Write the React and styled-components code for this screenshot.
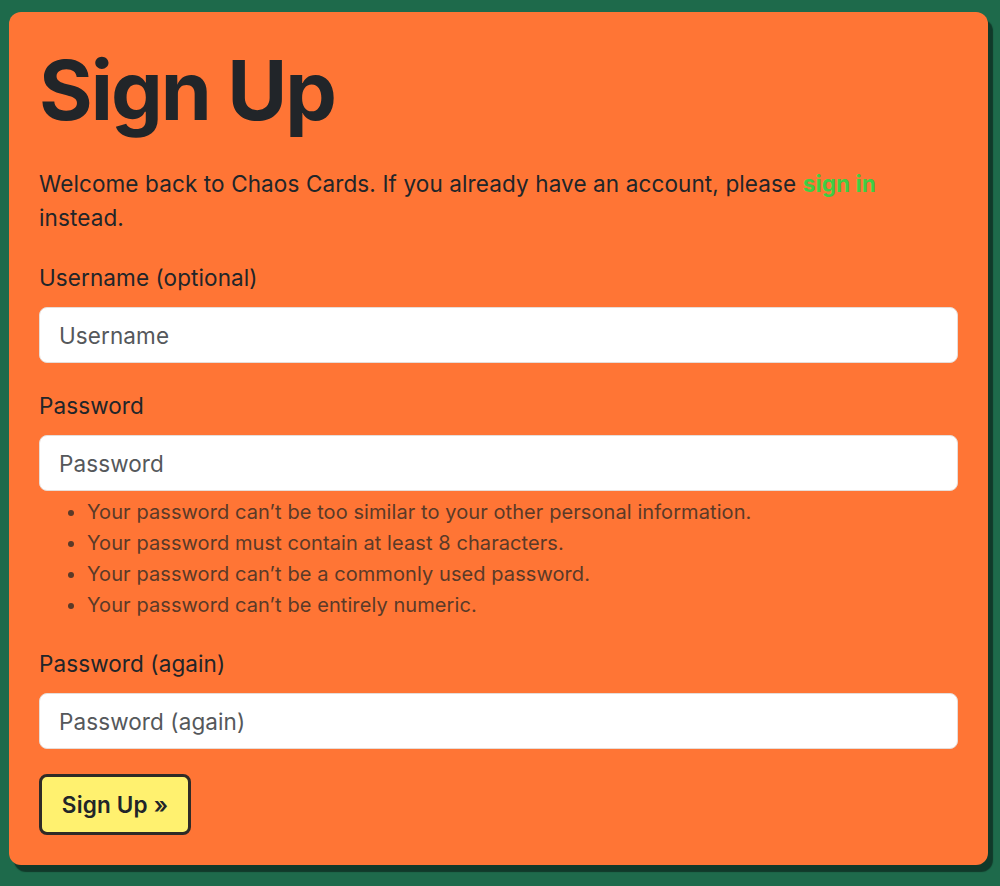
import React from "react";
import styled, { createGlobalStyle } from "styled-components";

const Global = createGlobalStyle`
  html, body { margin: 0; padding: 0; }
  body {
    background: #1e6a4b;
    font-family: Inter, "Noto Sans", "Liberation Sans", sans-serif;
    color: #212529;
    font-size: 22.5px;
    line-height: 1.5;
    letter-spacing: 0.1px;
  }
  * { box-sizing: border-box; }
`;

const Page = styled.div`
  padding: 12px 12px 14px 9px;
  min-height: 886px;
`;

const Card = styled.form`
  background: #ff7535;
  border-radius: 12px;
  padding: 30px;
  width: 979px;
  box-shadow: 5px 7px 1px #11392a;
`;

const Title = styled.h1`
  margin: 0 0 27px;
  font-size: 82px;
  line-height: 1.2;
  font-weight: 700;
  letter-spacing: -2px;
`;

const Intro = styled.p`
  margin: 0 0 26px;
  font-size: 22.5px;
  line-height: 34px;
  letter-spacing: 0.12px;
`;

const Link = styled.a`
  color: #3fcd44;
  font-weight: 700;
  text-decoration: none;
`;

const Group = styled.div`
  display: flex;
  flex-direction: column;
  margin-bottom: ${(p) => p.$gap || 26}px;
`;

const Label = styled.label`
  font-size: 22.5px;
  line-height: 34px;
  margin-bottom: 12px;
`;

const Input = styled.input`
  height: 56px;
  width: 100%;
  border: 1px solid #e6ddd8;
  border-radius: 8px;
  background: #fff;
  padding: 0 19px;
  font-family: inherit;
  font-size: 22.5px;
  letter-spacing: 0.1px;
  color: #212529;
  outline: none;
  &::placeholder { color: #55585b; }
`;

const Help = styled.ul`
  margin: 6px 0 0;
  padding-left: 48px;
  font-size: 20px;
  line-height: 31px;
  letter-spacing: 0.08px;
  color: #5a3a28;
`;

const Button = styled.button`
  width: 152px;
  height: 61px;
  background: #fff16f;
  border: 3px solid #2f2b26;
  border-radius: 8px;
  font-family: inherit;
  font-size: 22.5px;
  font-weight: 600;
  letter-spacing: 0.2px;
  color: #212529;
  padding: 0;
  cursor: pointer;
`;

const rules = [
  "Your password can’t be too similar to your other personal information.",
  "Your password must contain at least 8 characters.",
  "Your password can’t be a commonly used password.",
  "Your password can’t be entirely numeric.",
];

export default function App() {
  return (
    <>
      <Global />
      <Page>
        <Card onSubmit={(e) => e.preventDefault()}>
          <Title>Sign Up</Title>
          <Intro>
            Welcome back to Chaos Cards. If you already have an account, please{" "}
            <Link href="#">sign in</Link> instead.
          </Intro>
          <Group>
            <Label>Username (optional)</Label>
            <Input placeholder="Username" />
          </Group>
          <Group>
            <Label>Password</Label>
            <Input type="password" placeholder="Password" />
            <Help>
              {rules.map((r) => (
                <li key={r}>{r}</li>
              ))}
            </Help>
          </Group>
          <Group $gap={25}>
            <Label>Password (again)</Label>
            <Input type="password" placeholder="Password (again)" />
          </Group>
          <Button type="submit">Sign Up »</Button>
        </Card>
      </Page>
    </>
  );
}
